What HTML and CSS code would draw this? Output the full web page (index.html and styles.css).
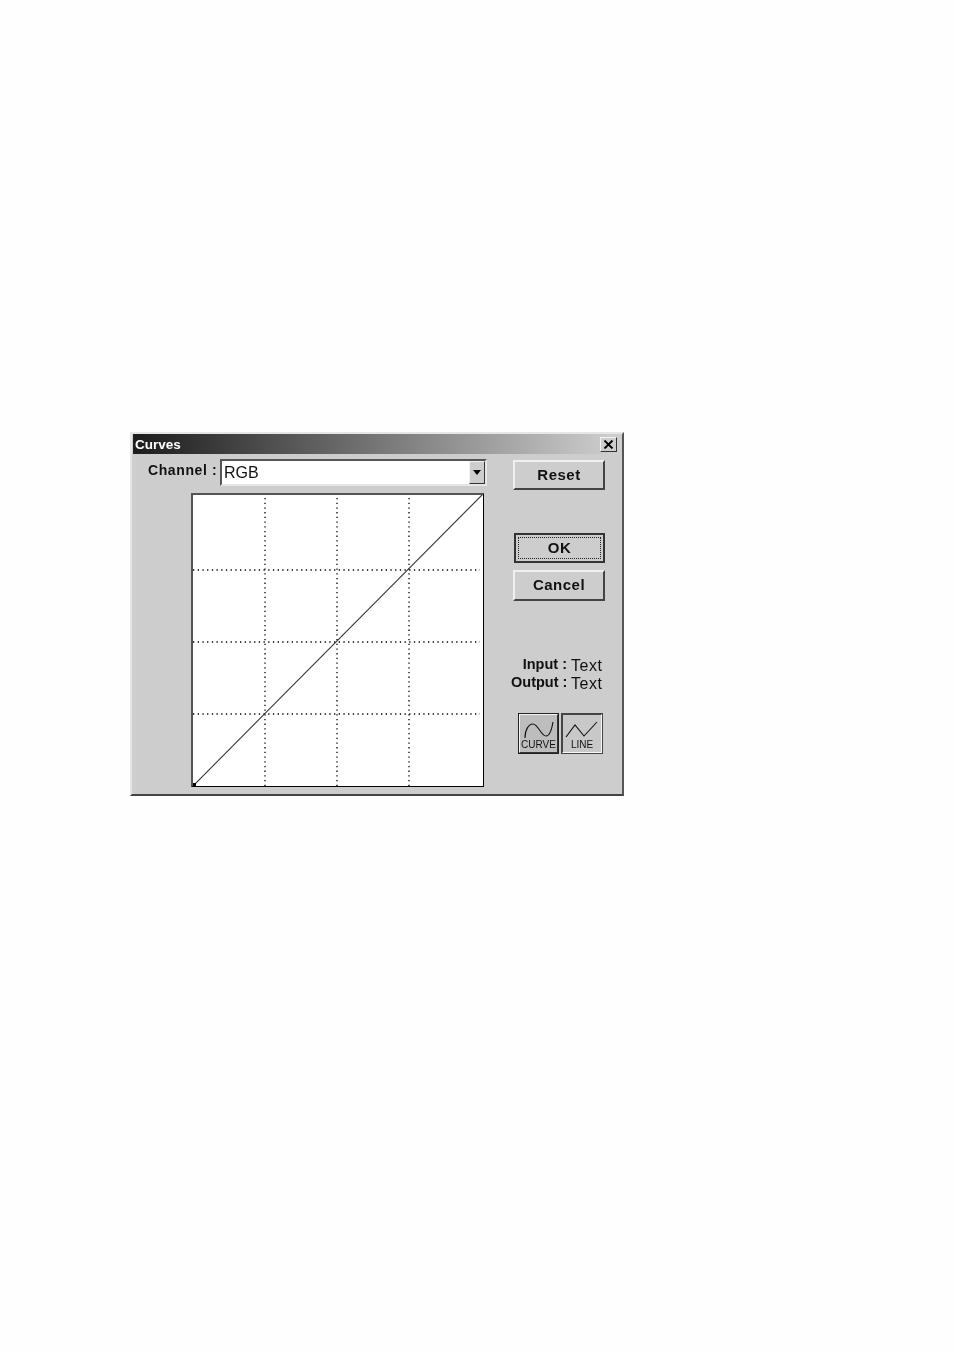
FILE: index.html

```html
<!DOCTYPE html>
<html lang="en">
<head>
  <meta charset="UTF-8" />
  <title>Curves</title>
  <link rel="stylesheet" href="styles.css">
</head>
<body>
  <div class="dialog">
    <div class="titlebar">
      <span class="title">Curves</span>
      <button class="close-btn">
        <svg width="11" height="9" viewBox="0 0 11 9"><path d="M1.5 0.5 L9.5 8.5 M9.5 0.5 L1.5 8.5" stroke="#000" stroke-width="1.9" fill="none"/></svg>
      </button>
    </div>
    <div class="main">
      <div class="left-col">
        <div class="channel-row">
          <span class="channel-label">Channel :</span>
          <div class="combo">
            <span class="combo-value">RGB</span>
            <span class="combo-btn"><span class="combo-arrow"></span></span>
          </div>
        </div>
        <div class="graph">
          <svg width="290" height="291" viewBox="0 0 290 291">
            <path class="grid-v" d="M72 3 V291 M144 3 V291 M216 3 V291"/>
            <path class="grid-h" d="M0 75 H287 M0 147 H287 M0 219 H287"/>
            <path class="diag" d="M0 291 L290 -1"/>
            <rect x="0" y="288" width="3" height="3" fill="#000"/>
          </svg>
        </div>
      </div>
      <div class="right-col">
        <button class="btn">Reset</button>
        <button class="btn btn-default"><span class="focus">OK</span></button>
        <button class="btn btn-cancel">Cancel</button>
        <div class="readout">
          <div class="readout-row"><span class="readout-label">Input :</span><span class="readout-value">Text</span></div>
          <div class="readout-row"><span class="readout-label">Output :</span><span class="readout-value">Text</span></div>
        </div>
        <div class="mode-btns">
          <div class="mode-btn">
            <svg width="37" height="24" viewBox="0 0 37 24"><path d="M5 22 C5 13 9 8 13 8 C18 8 21 20 26 20 C30 20 32 12 33 6" fill="none" stroke="#111" stroke-width="1.1"/></svg>
            <span class="mode-text">CURVE</span>
          </div>
          <div class="mode-btn mode-btn-on">
            <svg width="38" height="24" viewBox="0 0 38 24"><path d="M3 21 L12 9 L21 20 L34 6" fill="none" stroke="#111" stroke-width="1.1"/></svg>
            <span class="mode-text">LINE</span>
          </div>
        </div>
      </div>
    </div>
  </div>
</body>
</html>
```

FILE: styles.css

```css
body {
  margin: 0;
  padding: 432px 0 0 130px;
  background: #fefefe;
  font-family: 'Liberation Sans', Arial, sans-serif;
  color: #111;
}
.dialog {
  width: 494px;
  height: 364px;
  box-sizing: border-box;
  background: #cdcdcd;
  border-top: 2px solid #e6e6e6;
  border-left: 2px solid #e6e6e6;
  border-right: 2px solid #555;
  border-bottom: 2px solid #444;
  padding: 0 1px;
  filter: blur(0.35px);
}
.titlebar {
  height: 20px;
  display: flex;
  align-items: center;
  justify-content: space-between;
  padding: 0 4px 0 2px;
  background: linear-gradient(to right, #1c1c1c, #d0d0d0);
}
.title {
  color: #fff;
  font-size: 13.5px;
  font-weight: bold;
}
.close-btn {
  width: 17px;
  height: 15px;
  padding: 0;
  display: flex;
  align-items: center;
  justify-content: center;
  background: #cdcdcd;
  border: 1px solid;
  border-color: #f2f2f2 #333 #333 #f2f2f2;
}
.main {
  display: flex;
}
.left-col {
  padding: 5px 0 0 15px;
}
.channel-row {
  display: flex;
  align-items: center;
  gap: 3px;
}
.channel-label {
  width: 69px;
  margin-top: -5px;
  font-size: 14px;
  font-weight: bold;
  letter-spacing: 0.6px;
  white-space: nowrap;
}
.combo {
  width: 267px;
  height: 27px;
  box-sizing: border-box;
  display: flex;
  align-items: center;
  justify-content: space-between;
  background: #fff;
  border: 2px solid;
  border-color: #555 #e6e6e6 #e6e6e6 #555;
}
.combo-value {
  padding-left: 2px;
  font-size: 16px;
}
.combo-btn {
  width: 16px;
  height: 23px;
  box-sizing: border-box;
  display: flex;
  align-items: center;
  justify-content: center;
  background: #cdcdcd;
  border: 1px solid;
  border-color: #f2f2f2 #333 #333 #f2f2f2;
}
.combo-arrow {
  width: 0;
  height: 0;
  border-left: 4px solid transparent;
  border-right: 4px solid transparent;
  border-top: 5px solid #000;
}
.graph {
  width: 293px;
  height: 294px;
  box-sizing: border-box;
  margin: 7px 0 0 43px;
  background: #fff;
  border: 1px solid #000;
  border-top: 2px solid #555;
  border-left: 2px solid #555;
}
.graph svg {
  display: block;
  overflow: hidden;
}
.grid-v, .grid-h {
  fill: none;
  stroke: #000;
  stroke-width: 1.3;
  stroke-dasharray: 1.3 3.4;
}
.diag {
  fill: none;
  stroke: #333;
  stroke-width: 1.1;
}
.right-col {
  width: 92px;
  margin-left: 26px;
  display: flex;
  flex-direction: column;
  align-items: flex-start;
}
.btn {
  width: 92px;
  height: 30px;
  margin-top: 6px;
  padding: 0 0 2px;
  font-family: inherit;
  font-size: 15px;
  font-weight: bold;
  letter-spacing: 0.5px;
  color: #111;
  background: #cdcdcd;
  border: 2px solid;
  border-color: #f0f0f0 #444 #444 #f0f0f0;
}
.btn-default {
  width: 91px;
  margin: 43px 0 0 1px;
  padding: 2px;
  border-color: #333;
}
.focus {
  display: flex;
  align-items: center;
  justify-content: center;
  height: 100%;
  padding-bottom: 2px;
  box-sizing: border-box;
  border: 1px dotted #222;
}
.btn-cancel {
  height: 31px;
  margin-top: 7px;
}
.readout {
  width: 94px;
  margin: 54px 0 0 -2px;
}
.readout-row {
  display: flex;
  height: 18px;
  align-items: center;
  gap: 4px;
}
.readout-label {
  width: 56px;
  text-align: right;
  font-size: 14.5px;
  font-weight: bold;
  white-space: nowrap;
}
.readout-value {
  padding-top: 3px;
  font-size: 16px;
  letter-spacing: 0.5px;
  font-weight: normal;
}
.mode-btns {
  display: flex;
  gap: 2px;
  margin: 22px 0 0 5px;
}
.mode-btn {
  width: 41px;
  height: 41px;
  box-sizing: border-box;
  display: flex;
  flex-direction: column;
  align-items: center;
  background: #bdbdbd;
  border: 2px solid #333;
  border-top-color: #f4f4f4;
  border-left-color: #f4f4f4;
  outline: 1px solid #222;
  outline-offset: -1px;
}
.mode-btn svg {
  flex: none;
  margin-top: 1px;
}
.mode-btn-on {
  width: 42px;
  background: #c8c8c8;
  border-color: #444 #f8f8f8 #f8f8f8 #444;
  outline-color: #444;
}
.mode-text {
  font-size: 10px;
  line-height: 10px;
  color: #111;
}
```
